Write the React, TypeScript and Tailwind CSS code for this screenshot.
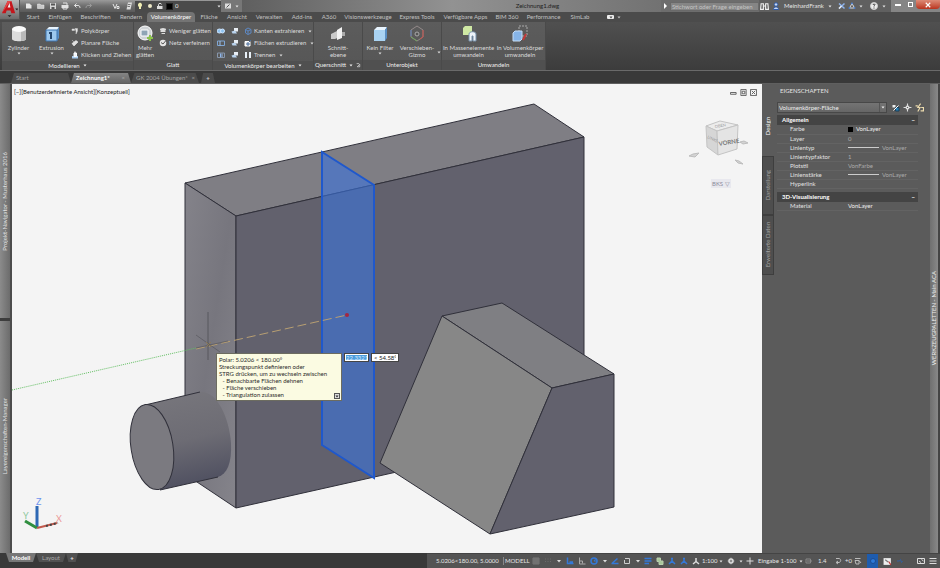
import type { ReactNode } from "react";

const ribbonTabs = [
  { label: "Start", width: "w-[22px]" },
  { label: "Einfügen", width: "w-[32px]" },
  { label: "Beschriften", width: "w-[39px]" },
  { label: "Rendern", width: "w-[32px]" },
  { label: "Volumenkörper", width: "w-[48px]" },
  { label: "Fläche", width: "w-[28px]" },
  { label: "Ansicht", width: "w-[28px]" },
  { label: "Verwalten", width: "w-[36px]" },
  { label: "Add-ins", width: "w-[30px]" },
  { label: "A360", width: "w-[24px]" },
  { label: "Visionswerkzeuge", width: "w-[54px]" },
  { label: "Express Tools", width: "w-[44px]" },
  { label: "Verfügbare Apps", width: "w-[53px]" },
  { label: "BIM 360", width: "w-[30px]" },
  { label: "Performance", width: "w-[43px]" },
  { label: "SimLab", width: "w-[30px]" },
];

const generalRows = [
  { label: "Farbe", value: "VonLayer", kind: "color" },
  { label: "Layer", value: "0", kind: "dim" },
  { label: "Linientyp", value: "VonLayer", kind: "line" },
  { label: "Linientypfaktor", value: "1", kind: "dim" },
  { label: "Plotstil", value: "VonFarbe", kind: "dim" },
  { label: "Linienstärke", value: "VonLayer", kind: "line" },
  { label: "Hyperlink", value: "", kind: "plain" },
];

function Svg({ size = 8, children }: { size?: number; children: ReactNode }) {
  return (
    <svg
      width={size}
      height={size}
      viewBox="0 0 16 16"
      fill="none"
      stroke="currentColor"
      strokeWidth="2"
      className="shrink-0"
      aria-hidden="true"
    >
      {children}
    </svg>
  );
}

function Caret() {
  return (
    <svg width="4" height="3" viewBox="0 0 4 3" className="shrink-0" aria-hidden="true">
      <path d="M0.5 0.5h3L2 2.5z" fill="currentColor" />
    </svg>
  );
}

/* ---------- title bar ---------- */

const quickIcons: { name: string; icon: ReactNode }[] = [
  { name: "Neu", icon: <path d="M2 3h7l4 4v6H2z" fill="#e8e8e8" stroke="none" /> },
  { name: "Öffnen", icon: <path d="M1 4h5l2 2h6v7H1z" fill="#c9c9c9" stroke="#eee" strokeWidth="1" /> },
  {
    name: "Speichern",
    icon: (
      <>
        <path d="M2 2h12v12H2z" fill="#d6d6d6" stroke="none" />
        <path d="M4 3h8v4H4zM5 10h6v4H5z" fill="#555" stroke="none" />
      </>
    ),
  },
  {
    name: "Drucken",
    icon: (
      <>
        <path d="M1 6h14v6H1z" fill="#e2e2e2" stroke="none" />
        <path d="M4 2h8v4M4 11h8v3H4z" stroke="#e2e2e2" />
      </>
    ),
  },
  { name: "Zurück", icon: <path d="M7 3L3 7l4 4M3 7h7c3 0 4 2 4 5" stroke="#e2e2e2" /> },
  { name: "Wiederherstellen", icon: <path d="M9 3l4 4-4 4M13 7H6c-3 0-4 2-4 5" stroke="#999" /> },
];

function TitleBar() {
  return (
    <header className="flex h-[12px] items-center bg-linear-to-b from-[#9a9a9a] via-[#6e6e6e] to-[#5a5a5a] text-[#e6e6e6]">
      <div className="flex h-full items-center gap-[3px] pl-[24px]">
        {quickIcons.map((q) => (
          <button key={q.name} type="button" aria-label={q.name} className="flex w-[9px] justify-center">
            <Svg>{q.icon}</Svg>
          </button>
        ))}
      </div>
      <div className="ml-[19px] flex items-center gap-[5px]">
        <button type="button" aria-label="Arbeitsbereich">
          <Svg>
            <path d="M2 4l4 9 4-9M10 9h4v4h-4z" stroke="#e6e6e6" />
          </Svg>
        </button>
        <button type="button" aria-label="Layereigenschaften">
          <Svg>
            <path d="M6 1h8l-3 14H3z" fill="#ddd" stroke="none" />
            <path d="M6 5h5M5 9h5" stroke="#777" />
          </Svg>
        </button>
      </div>
      <div className="ml-[2px] flex h-[11px] w-[86px] items-center gap-[2px] bg-[#4a4a4a] pl-px">
        <Svg>
          <path d="M8 1a5 5 0 0 1 2 9v4H6v-4a5 5 0 0 1 2-9z" fill="#f0eeb4" stroke="none" />
        </Svg>
        <Svg>
          <circle cx="8" cy="8" r="4" fill="#eee9c8" stroke="none" />
        </Svg>
        <Svg>
          <path d="M5 8V5c0-3 6-3 6 0" stroke="#ddd" />
          <path d="M2 8h11v6H2z" fill="#ddd" stroke="none" />
        </Svg>
        <span className="size-[7px] border border-[#222] bg-black" />
        <select aria-label="Layer" className="min-w-0 flex-1 appearance-none">
          <option>0</option>
        </select>
        <Caret />
      </div>
      <div className="flex h-full items-center gap-[3px] bg-[#777] px-[3px]">
        <Svg>
          <path d="M2 3h12v10H2z" fill="#ddd" stroke="none" />
          <path d="M5 11l6-6" stroke="#555" />
        </Svg>
        <Caret />
      </div>
      <h1 className="flex h-full flex-1 items-center justify-center bg-linear-to-r from-[#5f5f5f] via-[#929292] to-[#727272] pl-[172px] text-[#1d1d1d]">
        Zeichnung1.dwg
      </h1>
      <div className="flex h-full w-[98px] items-center bg-[#6d6d6d] pl-[3px]">
        <svg width="4" height="6" viewBox="0 0 4 6" aria-hidden="true">
          <path d="M0 0l3 3-3 3z" fill="#fff" />
        </svg>
        <input
          aria-label="Suche"
          placeholder="Stichwort oder Frage eingeben"
          className="ml-[2px] h-[9px] min-w-0 flex-1 border border-[#6a6a6a] bg-[#858585] px-[1px] placeholder:text-[#c4c4c4]"
        />
      </div>
      <div className="flex h-full w-[132px] items-center bg-[#606060]">
        <button type="button" aria-label="Suchen" className="pl-[1px]">
          <Svg size={9}>
            <path d="M2 3h4v10H1zM10 3h4l1 10h-5zM6 7h4" stroke="#eee" />
          </Svg>
        </button>
        <button type="button" className="ml-[3px] flex items-center gap-[4px]">
          <Svg>
            <circle cx="8" cy="5" r="3.5" fill="#c7d8f5" stroke="#2f5ba8" />
            <path d="M3 15c0-7 10-7 10 0z" fill="#c7d8f5" stroke="#2f5ba8" />
          </Svg>
          MeinhardFrank
          <Caret />
        </button>
        <button type="button" aria-label="Exchange" className="ml-[6px]">
          <Svg>
            <path d="M2 3l11 10M13 3L2 13" stroke="#8fb4ee" strokeWidth="3" />
            <path d="M2 13L7 8" stroke="#eee" strokeWidth="3" />
          </Svg>
        </button>
        <button type="button" aria-label="Verbunden bleiben" className="ml-[2px] flex items-center gap-[3px]">
          <Svg>
            <path d="M8 3L3 12h10z" stroke="#ddd" />
            <circle cx="8" cy="3" r="2" fill="#4c80d0" stroke="none" />
            <circle cx="3" cy="12" r="2" fill="#4c80d0" stroke="none" />
            <circle cx="13" cy="12" r="2" fill="#4c80d0" stroke="none" />
          </Svg>
          <Caret />
        </button>
        <button type="button" aria-label="Hilfe" className="ml-[7px] flex items-center gap-[4px]">
          <Svg>
            <circle cx="8" cy="8" r="7" fill="#eee" stroke="#ccc" />
            <path d="M6 6c0-3 5-2 4 0-1 1-2 1-2 3M8 11v2" stroke="#333" />
          </Svg>
          <Caret />
        </button>
      </div>
      <div className="flex h-full items-start bg-[#858585] text-white">
        <button type="button" aria-label="Minimieren" className="flex h-[9px] w-[14px] items-center justify-center">
          <span className="h-[2px] w-[6px] bg-white" />
        </button>
        <button type="button" aria-label="Wiederherstellen" className="flex h-[9px] w-[11px] items-center justify-center">
          <span className="size-[5px] border border-white" />
        </button>
        <button
          type="button"
          aria-label="Schließen"
          className="flex h-[9px] w-[24px] items-center justify-center rounded-b-sm bg-linear-to-b from-[#dc8a76] to-[#b9321c]"
        >
          <Svg size={6}>
            <path d="M2 2l12 12M14 2L2 14" stroke="#fff" strokeWidth="3" />
          </Svg>
        </button>
      </div>
    </header>
  );
}

/* ---------- ribbon ---------- */

function RibbonPanel({
  title,
  width,
  arrow,
  extra,
  children,
}: {
  title: string;
  width: string;
  arrow?: boolean;
  extra?: boolean;
  children: ReactNode;
}) {
  return (
    <section className={`flex shrink-0 flex-col border-r border-[#4a4a4a] bg-linear-to-b from-[#5c5c5c] to-[#565656] ${width}`}>
      <div className="flex flex-1 items-start pt-[3px]">{children}</div>
      <h2 className="flex h-[10px] items-center justify-center gap-[3px] bg-[#505050] text-[#efefef]">
        {title}
        {arrow && <Caret />}
        {extra && <Svg size={5}><path d="M2 2h8M4 12L12 4v8z" /></Svg>}
      </h2>
    </section>
  );
}

function BigButton({ icon, lines, width, caret }: { icon: ReactNode; lines: string[]; width: string; caret?: boolean }) {
  return (
    <button type="button" className={`flex flex-col items-center leading-[7px] ${width}`}>
      <svg width="18" height="17" viewBox="0 0 18 17" aria-hidden="true">
        {icon}
      </svg>
      <span className="mt-[2px] flex flex-col items-center">
        {lines.map((line) => (
          <span key={line} className="whitespace-nowrap">{line}</span>
        ))}
      </span>
      {caret && <span className="mt-[1px]"><Caret /></span>}
    </button>
  );
}

function SmallButton({ icon, label, caret }: { icon: ReactNode; label: string; caret?: boolean }) {
  return (
    <button type="button" className="flex h-[12px] items-center gap-[2px] whitespace-nowrap">
      <Svg>{icon}</Svg>
      {label}
      {caret && <span className="ml-[2px]"><Caret /></span>}
    </button>
  );
}

const boolIcons = [
  <g key="union"><ellipse cx="5" cy="8" rx="5" ry="4" fill="#8fc3f0" stroke="#cfe6ff" /><ellipse cx="11" cy="8" rx="4" ry="4" fill="#8fc3f0" stroke="#cfe6ff" /></g>,
  <g key="diff"><path d="M1 4h14v9H1z" stroke="#7fa6d4" /><path d="M6 4v9" stroke="#9dc3ee" /></g>,
  <g key="inter"><path d="M1 4h14v9H1z" stroke="#8796ab" /><path d="M7 5v7M10 5v7" stroke="#8fb6ea" /></g>,
];

function CubeIcon({ tint }: { tint: string }) {
  return (
    <>
      <path d="M3 5l3-3h10l-2 3z" fill="#e9f5ff" />
      <path d="M3 5h11v11H3z" fill={tint} />
      <path d="M14 5l2-3v11l-2 3z" fill="#5a8fc4" />
    </>
  );
}

function Ribbon() {
  return (
    <div className="flex h-[49px] border-b border-[#6a6a6a] bg-linear-to-b from-[#505050] to-[#3c3c3c] pl-[2px] text-[#dcdcdc]">
      <RibbonPanel title="Modellieren" width="w-[132px]" arrow>
        <BigButton
          width="w-[33px]"
          lines={["Zylinder"]}
          caret
          icon={
            <>
              <path d="M2 4v10c0 3 14 3 14 0V4z" fill="#dcdcdc" />
              <path d="M11 5v11c3 0 5-1 5-2V4z" fill="#b9b9b9" />
              <ellipse cx="9" cy="4" rx="7" ry="3" fill="#fafafa" />
            </>
          }
        />
        <BigButton
          width="w-[33px]"
          lines={["Extrusion"]}
          caret
          icon={
            <>
              <CubeIcon tint="#9cc8ee" />
              <path d="M3 5h11v11H3z" stroke="#3d74b0" fill="none" />
              <path d="M6 8h2v6" stroke="#24466e" strokeWidth="2" fill="none" />
            </>
          }
        />
        <div className="ml-[3px] flex flex-col">
          <SmallButton label="Polykörper" icon={<path d="M2 4h5v3H2zM8 3h5v5l-3 6V8z" fill="#e8e8e8" stroke="#ccc" strokeWidth="1" />} />
          <SmallButton label="Planare Fläche" icon={<><path d="M2 9l8-6 4 3-8 8z" fill="#e0e0e0" stroke="#fff" strokeWidth="1" /><path d="M3 3l2 2" /></>} />
          <SmallButton label="Klicken und Ziehen" icon={<><path d="M2 10h12v5H2z" fill="#a9cdf0" stroke="none" /><path d="M6 4h5v7H6zM8 1v6" fill="#e8f3ff" stroke="#fff" /></>} />
        </div>
      </RibbonPanel>
      <RibbonPanel title="Glatt" width="w-[79px]">
        <BigButton
          width="w-[22px]"
          lines={["Mehr", "glätten"]}
          icon={
            <>
              <circle cx="9" cy="8" r="7" fill="#cfd3d6" stroke="#fff" />
              <path d="M5 5h7v6H5z" fill="#8fa5b5" stroke="#fff" />
              <path d="M14 10v6M11 13h6" stroke="#8bc34a" strokeWidth="2" />
            </>
          }
        />
        <div className="ml-[3px] flex flex-col">
          <SmallButton label="Weniger glätten" icon={<><ellipse cx="8" cy="5" rx="6" ry="3" fill="#ddd" stroke="none" /><path d="M3 9h10M5 13h7" stroke="#ddd" /></>} />
          <SmallButton label="Netz verfeinern" icon={<><circle cx="8" cy="8" r="6.5" fill="#e5e5e5" stroke="none" /><path d="M4 7l4 3 6-7" stroke="#555" /></>} />
        </div>
      </RibbonPanel>
      <RibbonPanel title="Volumenkörper bearbeiten" width="w-[101px]" arrow>
        <div className="ml-[4px] flex flex-col">
          {boolIcons.map((icon) => (
            <button key={icon.key} type="button" aria-label={String(icon.key)} className="flex h-[12px] items-center">
              <Svg>{icon}</Svg>
            </button>
          ))}
        </div>
        <div className="ml-[6px] flex flex-col">
          {["Schneiden", "Verdicken", "Kanten"].map((name) => (
            <button key={name} type="button" aria-label={name} className="flex h-[12px] items-center">
              <Svg>
                <path d="M6 2h8v7H6z" fill="#e9eef4" stroke="none" />
                <path d="M1 9l7-2 4 6H3z" fill="#b9d3ee" stroke="none" />
              </Svg>
            </button>
          ))}
        </div>
        <div className="ml-[5px] flex flex-col">
          <SmallButton caret label="Kanten extrahieren" icon={<path d="M3 5l5-3 6 3v7l-6 3-5-3zM3 5l5 3 6-3M8 8v7" stroke="#5e88c2" />} />
          <SmallButton caret label="Flächen extrudieren" icon={<><path d="M2 5h10v9H2z" fill="#eee" stroke="#fff" /><path d="M6 8h4v4H6zM10 6l4-4" stroke="#4b6f9e" /></>} />
          <SmallButton caret label="Trennen" icon={<path d="M2 2h4v12H2zM10 2h4v12h-4z" fill="#e8f0f8" stroke="none" />} />
        </div>
      </RibbonPanel>
      <RibbonPanel title="Querschnitt" width="w-[49px]" arrow extra>
        <BigButton
          width="w-[48px]"
          lines={["Schnitt-", "ebene"]}
          icon={
            <>
              <path d="M2 9l6-3h5v5l-7 3H2z" fill="#c9c9c9" />
              <path d="M8 5l5-3v11l-5 2z" fill="#f2f2f2" />
              <path d="M13 7h3v4h-3z" fill="#aaa" />
            </>
          }
        />
      </RibbonPanel>
      <RibbonPanel title="Unterobjekt" width="w-[79px]">
        <BigButton width="w-[34px]" lines={["Kein Filter"]} caret icon={<CubeIcon tint="#a9d3f3" />} />
        <BigButton
          width="w-[40px]"
          lines={["Verschieben-", "Gizmo"]}
          icon={
            <>
              <path d="M9 1l6 4v7l-6 4-6-4V5z" fill="none" stroke="#948a8a" />
              <circle cx="9" cy="9" r="2" fill="#555" stroke="#a9a9a9" />
              <path d="M15 5v7l-3 2" fill="none" stroke="#c5504a" />
              <path d="M9 16l-6-4" stroke="#6fa35c" />
              <path d="M3 5v6" stroke="#5f7fb5" />
            </>
          }
        />
        <span className="mt-[26px]"><Caret /></span>
      </RibbonPanel>
      <RibbonPanel title="Umwandeln" width="w-[104px]">
        <BigButton
          width="w-[53px]"
          lines={["In Massenelemente", "umwandeln"]}
          icon={
            <>
              <path d="M3 3l2-2h7v7l-2 2H3z" fill="#cfe8a4" />
              <path d="M9 16V9c0-3 7-3 7 0v7h-3v-5h-1v5z" fill="#eef3f8" stroke="#7690aa" />
            </>
          }
        />
        <BigButton
          width="w-[50px]"
          lines={["In Volumenkörper", "umwandeln"]}
          icon={
            <>
              <path d="M8 1h8v10H8z" fill="none" stroke="#aaa" strokeDasharray="2 1" />
              <path d="M2 8l2-2h7v8l-2 2H2z" fill="#86b4e8" stroke="#c5dcf6" />
              <path d="M12 15l3-6" stroke="#c0393b" strokeWidth="2" />
            </>
          }
        />
      </RibbonPanel>
    </div>
  );
}

/* ---------- drawing area ---------- */

function Scene() {
  return (
    <svg
      viewBox="12 84 750 469"
      className="absolute inset-0 size-full"
      role="img"
      aria-label="3D-Modell"
      fontFamily="Lato, sans-serif"
    >
      <defs>
        <linearGradient id="leftFace" x1="0" y1="0" x2="1" y2="1">
          <stop offset="0" stopColor="#84838a" />
          <stop offset="0.5" stopColor="#77767e" />
          <stop offset="1" stopColor="#85848b" />
        </linearGradient>
        <linearGradient id="pipe" x1="0.3" y1="0" x2="0.5" y2="1">
          <stop offset="0" stopColor="#77767c" />
          <stop offset="0.5" stopColor="#6d6c74" />
          <stop offset="1" stopColor="#4d4e5f" />
        </linearGradient>
      </defs>

      {/* wall */}
      <g stroke="#30303a" strokeWidth="1" strokeLinejoin="round">
        <path d="M185 183L534 104 584 137 236 216z" fill="#7f7e84" />
        <path d="M185 183L236 216V508L185 474z" fill="url(#leftFace)" />
        <path d="M236 216L584 137V430L236 508z" fill="#62616d" />
      </g>

      {/* cylinder */}
      <path d="M145 405L200 392C216 390 229 416 231 443 232 463 227 474 218 477L160 490z" fill="url(#pipe)" />
      <path d="M145 405L200 392M160 490L218 477" stroke="#30303a" fill="none" />
      <ellipse cx="152" cy="447" rx="21" ry="43" transform="rotate(-9 152 447)" fill="#7b7a80" stroke="#30303a" />

      {/* selected section plane */}
      <path d="M322 152L374 185V478L322 445z" fill="#3a73dd" fillOpacity="0.6" stroke="#1f58cc" strokeWidth="2" />

      {/* wedge */}
      <g stroke="#30303a" strokeWidth="1" strokeLinejoin="round">
        <path d="M442 316L502 303 614 374 552 388z" fill="#7f7f83" />
        <path d="M442 316L552 388 490 534 380 463z" fill="#878787" />
        <path d="M552 388L614 374V507L490 534z" fill="#62616d" />
      </g>

      {/* tracking line and cursor */}
      <path d="M12 390L196 348" stroke="#62bf62" strokeDasharray="1 1" />
      <path d="M196 349L347 315" stroke="#b89f72" strokeDasharray="9 4" />
      <g stroke="#4a4a50" strokeOpacity="0.7">
        <path d="M208 312V360" />
        <path d="M196 335L220 352M196 348L228 341" strokeOpacity="0.5" />
      </g>
      <path d="M206 342l5 5M211 342l-5 5" stroke="#8c7a55" />
      <circle cx="347" cy="315" r="2" fill="#a5263f" />

      {/* axis tripod */}
      <g fontSize="9">
        <path d="M37 506V528" stroke="#2e68b4" strokeWidth="3" />
        <path d="M37 528L25 521" stroke="#2f8e3f" strokeWidth="3" />
        <path d="M37 528L57 523" stroke="#c25a4d" strokeWidth="2" />
        <path d="M46 526L58 523" stroke="#444" strokeWidth="2" strokeDasharray="2 2" />
        <text x="36" y="505" fill="#6f94ee">Z</text>
        <text x="23" y="519" fill="#8bc79a">Y</text>
        <text x="56" y="522" fill="#eb9a98">X</text>
      </g>

      {/* view cube */}
      <g stroke="#c4c4c4" strokeWidth="1">
        <path d="M706 126L720 121 738 125 717 131z" fill="#ececec" />
        <path d="M706 126L717 131 718 155 707 147z" fill="#d6d6d6" />
        <path d="M717 131L738 125 737 149 718 155z" fill="#e4e4e4" />
      </g>
      <text x="719" y="146" fontSize="6" fontWeight="bold" fill="#777" transform="rotate(-9 719 146)">VORNE</text>
      <text x="707" y="138" fontSize="4" fill="#999" transform="rotate(25 707 138)">LINKS</text>
      <text x="715" y="128" fontSize="4" fill="#999" transform="rotate(-9 715 128)">OBEN</text>
      <g fill="#d3d3d3" stroke="#bdbdbd" strokeWidth="1">
        <path d="M689 156l4-2 6-1-4 4z" />
        <path d="M740 142l4-1 4 2-5 1z" />
        <path d="M735 160l4 1 4 3-5-1z" />
      </g>
      <path d="M711 179h20v9h-20z" fill="#e8e8ee" />
      <text x="712" y="186" fontSize="6" fill="#8c8c9c">BKS ▽</text>
    </svg>
  );
}

function Canvas() {
  return (
    <main className="relative min-w-0 flex-1 bg-[#f4f4f4] text-[#222]">
      <Scene />
      <div className="relative flex items-center justify-between py-[4px] pr-[5px] pl-[2px]">
        <button type="button">[−][Benutzerdefinierte Ansicht][Konzeptuell]</button>
        <div className="flex gap-[3px] text-[#555]">
          <button type="button" aria-label="Ansicht minimieren"><Svg size={7}><path d="M1 8h13v4H1z" /></Svg></button>
          <button type="button" aria-label="Ansicht wiederherstellen"><Svg size={7}><path d="M2 1h12v14H2zM5 5h6v6H5z" /></Svg></button>
          <button type="button" aria-label="Ansicht schließen"><Svg size={7}><path d="M1 1h14v14H1zM4 4l8 8M12 4l-8 8" /></Svg></button>
        </div>
      </div>
      <div
        role="tooltip"
        className="absolute top-[269px] left-[204px] w-[126px] border border-[#6c6c60] bg-[#fbfbe2] px-[2px] py-[2px] leading-[7px] whitespace-pre text-[#2b2b2b]"
      >
        <p>Polar: 5.0206 &lt; 180.00°</p>
        <p>Streckungspunkt definieren oder</p>
        <p>STRG drücken, um zu wechseln zwischen</p>
        <ul className="pl-[2px]">
          <li> - Benachbarte Flächen dehnen</li>
          <li> - Fläche verschieben</li>
          <li> - Triangulation zulassen</li>
        </ul>
        <span className="absolute right-[1px] bottom-[1px] flex size-[6px] items-center justify-center border border-[#555] bg-[#ddd]">
          <Caret />
        </span>
      </div>
      <div className="absolute top-[269px] left-[332px] flex gap-[2px]">
        <input
          aria-label="Abstand"
          defaultValue="22.3321"
          className="h-[9px] w-[25px] border border-[#444] bg-[#4a9bdc] px-[1px] text-[#d8ecff] ring-1 ring-white ring-inset"
        />
        <input aria-label="Winkel" defaultValue="< 54.58°" className="h-[9px] w-[28px] border border-[#444] bg-white px-[2px]" />
      </div>
    </main>
  );
}

/* ---------- property palette ---------- */

function PropertyGroup({ title, rows }: { title: string; rows: typeof generalRows }) {
  return (
    <table className="mb-[3px] w-full table-fixed border-collapse text-left">
      <thead>
        <tr className="h-[10px] bg-[#444] text-white">
          <th className="w-[71px] pl-[5px]">{title}</th>
          <th className="pr-[3px] text-right">−</th>
        </tr>
      </thead>
      <tbody>
        {rows.map((row) => (
          <tr key={row.label} className="h-[9px] border-b border-[#636363]">
            <th scope="row" className="pl-[13px] font-normal text-[#e2e2e2]">{row.label}</th>
            <td className={row.kind === "color" || row.kind === "plain" ? "text-[#eee]" : "text-[#ababab]"}>
              <span className="flex items-center gap-[3px]">
                {row.kind === "color" && <span className="size-[5px] bg-black" />}
                {row.kind === "line" && <span className="h-px w-[31px] bg-[#ccc]" />}
                {row.value}
              </span>
            </td>
          </tr>
        ))}
      </tbody>
    </table>
  );
}

function Palette() {
  return (
    <aside className="flex w-[168px] shrink-0 bg-[#5b5b5b]">
      <nav className="flex w-[12px] flex-col pt-[12px] text-[#a5a5a5]">
        <button type="button" className="flex h-[60px] items-center justify-center text-white">
          <span className="rotate-180 [writing-mode:vertical-rl]">Design</span>
        </button>
        <button type="button" className="flex h-[59px] items-center justify-center border border-[#3e3e3e] bg-[#4e4e4e]">
          <span className="rotate-180 [writing-mode:vertical-rl]">Darstellung</span>
        </button>
        <button type="button" className="flex h-[60px] items-center justify-center border border-[#3e3e3e] bg-[#4e4e4e]">
          <span className="rotate-180 whitespace-nowrap [writing-mode:vertical-rl]">Erweiterte Daten</span>
        </button>
      </nav>
      <div className="min-w-0 flex-1 pr-[5px] pl-[3px]">
        <h2 className="flex h-[13px] items-center pl-[3px] text-[#e4e4e4]">EIGENSCHAFTEN</h2>
        <div className="mt-[5px] flex h-[11px] items-center gap-[3px] text-[#eee]">
          <div className="flex h-full w-[110px] items-center border border-[#484848] bg-linear-to-b from-[#747474] to-[#666]">
            <select aria-label="Objekttyp" className="h-full min-w-0 flex-1 appearance-none px-[1px]">
              <option>Volumenkörper-Fläche</option>
            </select>
            <span className="flex h-full w-[7px] items-center justify-center border-l border-[#555]"><Caret /></span>
          </div>
          <button type="button" aria-label="PICKADD" className="ml-[2px]"><Svg><path d="M1 2h6v5H1z" fill="#eee" stroke="none" /><path d="M7 7h7v7H7z" fill="#2c7fb2" stroke="#17405c" /><path d="M3 13L13 3" stroke="#fff" /></Svg></button>
          <button type="button" aria-label="Objekte wählen"><Svg size={9}><path d="M8 1v5M8 10v5M1 8h5M10 8h5M6 6h4v4H6z" stroke="#ddd" /></Svg></button>
          <button type="button" aria-label="Schnellauswahl"><Svg size={9}><path d="M10 1L5 8h4l-4 7M1 5h4M11 8h4v6h-5" stroke="#eddcae" /></Svg></button>
        </div>
        <div className="mt-[2px] mr-[7px]">
          <PropertyGroup title="Allgemein" rows={generalRows} />
          <PropertyGroup title="3D-Visualisierung" rows={[{ label: "Material", value: "VonLayer", kind: "plain" }]} />
        </div>
      </div>
    </aside>
  );
}

/* ---------- status bar ---------- */

const BLUE = "#3478d6";

const statusIcons: { name: string; icon: ReactNode; width: string }[] = [
  { name: "Raster", width: "w-[12px]", icon: <path d="M2 2h12v12H2zM6 2v12M10 2v12M2 6h12M2 10h12" stroke="#999" strokeWidth="1" /> },
  { name: "Fang", width: "w-[12px]", icon: <path d="M3 3v10M8 3v10M13 3v10" stroke="#6a6a6a" strokeDasharray="2 3" /> },
  { name: "Fangmodus", width: "w-[10px]", icon: <path d="M4 6h8l-4 5z" fill="#ddd" stroke="none" /> },
  { name: "Dynamische Eingabe", width: "w-[12px]", icon: <path d="M3 1v12h12M7 10h7" stroke={BLUE} strokeWidth="3" /> },
  { name: "Ortho", width: "w-[12px]", icon: <path d="M3 1v13h12M4 8h5v5" stroke="#aaa" /> },
  { name: "Spurverfolgung", width: "w-[12px]", icon: <><circle cx="8" cy="8" r="6" stroke={BLUE} strokeWidth="3" /><path d="M8 8h7M8 8l4-5" stroke={BLUE} /></> },
  { name: "Winkel", width: "w-[9px]", icon: <path d="M4 6h8l-4 5z" fill="#ddd" stroke="none" /> },
  { name: "Objektfangspur", width: "w-[12px]", icon: <path d="M1 13h14M3 12L13 3" stroke={BLUE} strokeWidth="3" /> },
  { name: "Objektfang", width: "w-[12px]", icon: <path d="M4 3h9v10H3V6" stroke="#ccc" /> },
  { name: "Fangoptionen", width: "w-[9px]", icon: <path d="M4 6h8l-4 5z" fill="#ddd" stroke="none" /> },
  { name: "Linienstärke", width: "w-[12px]", icon: <path d="M1 3h14M1 8h14M1 13h9" stroke={BLUE} strokeWidth="3" /> },
  { name: "Auswahl", width: "w-[12px]", icon: <path d="M2 2h7v6h5v7H6V9H2z" fill="#a9c79b" stroke="#b9cfae" /> },
  { name: "3D-Objektfang", width: "w-[12px]", icon: <path d="M8 2v6l-6 6M8 8l6 6M6 3h4" stroke={BLUE} strokeWidth="3" /> },
  { name: "Dynamisches BKS", width: "w-[12px]", icon: <path d="M8 2v6l-6 6M8 8l6 6M6 3h4" stroke={BLUE} strokeWidth="3" /> },
  { name: "Beschriftung", width: "w-[12px]", icon: <path d="M8 2v7l-6 5M8 9l6 5" stroke="#ddd" strokeWidth="3" /> },
];

function StatusBar() {
  return (
    <footer className="flex h-[15px] items-center bg-[#393939] text-[#e6e6e6]">
      <nav className="flex h-full items-start pl-[6px]">
        <button type="button" className="flex h-[9px] w-[30px] items-center justify-center bg-[#777] font-bold text-white [clip-path:polygon(0_0,100%_0,90%_100%,10%_100%)]">Modell</button>
        <button type="button" className="flex h-[9px] w-[30px] items-center justify-center bg-[#515151] text-[#aaa] [clip-path:polygon(0_0,100%_0,90%_100%,10%_100%)]">Layout</button>
        <button type="button" aria-label="Neues Layout" className="flex h-[9px] w-[12px] items-center justify-center bg-[#515151] font-bold [clip-path:polygon(0_0,100%_0,80%_100%,20%_100%)]">+</button>
      </nav>
      <div className="ml-auto flex h-full w-[513px] items-center border-t border-[#444] bg-[#545454]">
        <span className="w-[76px] pl-[9px] whitespace-nowrap">5.0206&lt;180.00, 5.0000</span>
        <button type="button" className="w-[27px] border-l border-[#888] pl-[1px] text-left">MODELL</button>
        {statusIcons.map((s) => (
          <button key={s.name} type="button" aria-label={s.name} className={`flex justify-center ${s.width}`}>
            <Svg>{s.icon}</Svg>
          </button>
        ))}
        <button type="button" className="flex w-[25px] items-center gap-[2px]">1:100<Caret /></button>
        <button type="button" aria-label="Einstellungen" className="flex w-[19px] items-center gap-[4px]">
          <Svg><circle cx="8" cy="8" r="4" stroke="#ddd" strokeWidth="3" /><path d="M8 1v14M1 8h14" stroke="#ddd" strokeWidth="1" /></Svg>
          <Caret />
        </button>
        <button type="button" aria-label="Hinzufügen" className="w-[12px]"><Svg><path d="M8 1v14M1 8h14" stroke="#ddd" /></Svg></button>
        <button type="button" className="flex w-[47px] items-center gap-[2px] whitespace-nowrap">Eingabe 1-100<Caret /></button>
        <button type="button" aria-label="Isolieren" className="w-[13px]"><Svg><path d="M2 4h9v8H2zM4 8h10" stroke="#888" /></Svg></button>
        <span className="w-[16px]">1.4</span>
        <button type="button" aria-label="Aktualisieren" className="w-[11px]"><Svg><path d="M4 3h6c5 1 4 7 0 8H5M8 8l-4 3 4 3" stroke="#bbb" /></Svg></button>
        <span className="w-[9px]">+0</span>
        <button type="button" aria-label="Ersetzen" className="w-[13px]"><Svg><path d="M2 3h11M2 7h8v7H4zM10 7l4 5" stroke="#bbb" /></Svg></button>
        <button type="button" aria-label="Hardware" className="flex h-full w-[11px] items-center justify-center bg-[#1e5cae]"><Svg><circle cx="8" cy="8" r="5" fill="#2c79d8" stroke="#1c4d92" /></Svg></button>
        <button type="button" aria-label="Warnung" className="ml-[5px] w-[13px]"><Svg size={9}><path d="M1 2h13v12H1z" fill="#eee" stroke="none" /><path d="M4 5l5 4" stroke="#777" /><path d="M10 8l4 6" stroke="#b33" /></Svg></button>
        <button type="button" aria-label="Leistung" className="w-[12px]"><Svg><path d="M2 8h5l2-3 2 6 2-3" stroke="#345f9c" /></Svg></button>
        <button type="button" aria-label="Vollbild" className="mr-[4px] ml-auto"><Svg><path d="M1 3h14v10H1zM9 5l4 3M4 8l4 3" stroke="#ddd" /></Svg></button>
        <button type="button" aria-label="Anpassen" className="mr-[3px]"><Svg><path d="M1 3h14M1 8h14M1 13h14" stroke="#ddd" /></Svg></button>
      </div>
    </footer>
  );
}

export default function App() {
  return (
    <div className="flex h-screen flex-col overflow-hidden bg-[#3a3a3a] font-['Lato',sans-serif] text-[6px] leading-[8px]">
      <div className="relative">
        <TitleBar />
        <nav className="flex h-[10px] items-center bg-[#4b4b4b] pl-[22px] text-[#c2c2c2]">
          {ribbonTabs.map((tab) => (
            <button
              key={tab.label}
              type="button"
              className={`h-full whitespace-nowrap ${tab.width} ${
                tab.label === "Volumenkörper" ? "rounded-t-sm bg-[#747474] text-white" : ""
              }`}
            >
              {tab.label}
            </button>
          ))}
          <button type="button" aria-label="Multifunktionsleiste" className="ml-[12px] flex items-center gap-[3px]">
            <span className="flex h-[4px] w-[7px] items-center justify-center rounded-[1px] bg-[#eee] text-[#444]"><Caret /></span>
            <Caret />
          </button>
        </nav>
        <button
          type="button"
          aria-label="Anwendungsmenü"
          className="absolute top-0 left-0 h-[20px] w-[20px] border-r border-b border-[#555] bg-linear-to-b from-[#b9b9b9] to-[#6c6c6c]"
        >
          <svg viewBox="0 0 20 20" className="size-full" aria-hidden="true">
            <path d="M2 14L8 1h4l4 13h-4l-1-3H7l-1 3z" fill="#c4161c" />
            <path d="M8 8l2-5 1 5z" fill="#eee" />
            <path d="M8 1h4L9 4 2 14z" fill="#e5484a" />
            <path d="M8 16h4l-2 2zM16 9h3l-1 2z" fill="#222" />
          </svg>
        </button>
      </div>
      <Ribbon />
      <nav className="flex h-[13px] items-end border-b border-[#5f5f5f] bg-[#393939] pl-[11px] text-[#a3a3a3]">
        <button type="button" className="h-[10px] w-[60px] bg-[#4b4b4b] pl-[5px] text-left [clip-path:polygon(5%_0,95%_0,100%_100%,0_100%)]">Start</button>
        <button type="button" className="flex h-[10px] w-[60px] items-center justify-between bg-linear-to-b from-[#858585] to-[#656565] pr-[6px] pl-[5px] font-bold text-white [clip-path:polygon(5%_0,95%_0,100%_100%,0_100%)]">
          Zeichnung1*
          <span className="font-normal text-[#aaa]">×</span>
        </button>
        <button type="button" className="flex h-[10px] w-[68px] items-center justify-between bg-[#4b4b4b] pr-[4px] pl-[5px] [clip-path:polygon(5%_0,95%_0,100%_100%,0_100%)]">
          GK 2004 Übungen*
          <span>×</span>
        </button>
        <button type="button" aria-label="Neue Zeichnung" className="ml-[2px] flex h-[10px] w-[14px] items-center justify-center bg-[#4b4b4b] font-bold text-[#ccc] [clip-path:polygon(15%_0,85%_0,100%_100%,0_100%)]">+</button>
      </nav>
      <div className="flex min-h-0 flex-1">
        <aside className="flex w-[12px] shrink-0 flex-col items-center border-r-2 border-[#4c4c4c] bg-linear-to-r from-[#8b8b8b] to-[#6c6c6c] text-[#e3e3e3]">
          <button type="button" className="flex h-[234px] items-center">
            <span className="rotate-180 whitespace-nowrap [writing-mode:vertical-rl]">Projekt-Navigator - Musterhaus 2016</span>
          </button>
          <span className="h-[3px] w-full bg-[#3d3d3d]" />
          <button type="button" className="flex h-[231px] items-center">
            <span className="rotate-180 whitespace-nowrap [writing-mode:vertical-rl]">Layereigenschaften-Manager</span>
          </button>
        </aside>
        <Canvas />
        <Palette />
        <aside className="flex w-[10px] shrink-0 items-center justify-center border-r-2 border-[#444] bg-linear-to-r from-[#707070] to-[#888] text-[#eee]">
          <button type="button" className="rotate-180 whitespace-nowrap [writing-mode:vertical-rl]">WERKZEUGPALETTEN - Main ACA</button>
        </aside>
      </div>
      <StatusBar />
    </div>
  );
}
